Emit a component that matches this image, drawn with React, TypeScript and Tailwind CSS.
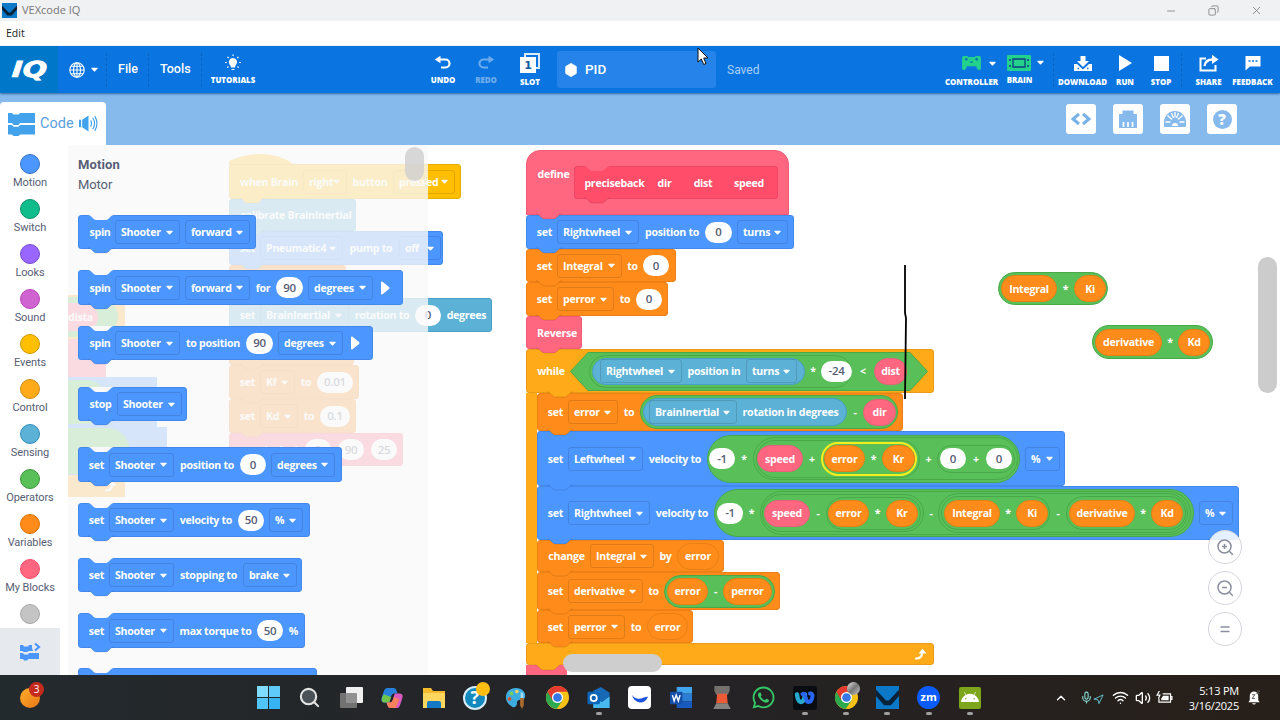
import type { ReactNode } from 'react';
import { Search, Wifi, Volume2, ChevronUp, Mic, Navigation, Minus, X, Copy } from 'lucide-react';
import { FaWhatsapp, FaAndroid } from 'react-icons/fa';

type BoxProps = { className?: string; children?: ReactNode };

const Label = ({ className = '', children }: BoxProps) => (
  <span className={`flex shrink-0 justify-center whitespace-nowrap ${className}`}>{children}</span>
);

const Caret = () => (
  <svg viewBox="0 0 8 5" className="h-[5px] w-[7px] shrink-0">
    <path d="M1 .4h6q1 .1.5 1L4.700 4.500q-.7.700-1.400 0L.5 1.400Q0 .5 1 .4z" fill="#fff" />
  </svg>
);

const Field = ({ className = '', children }: BoxProps) => (
  <span className={`flex h-6 shrink-0 items-center justify-between whitespace-nowrap rounded-[3px] border border-black/12 pr-[6px] pl-[5px] ${className}`}>
    {children}
    <Caret />
  </span>
);

const Num = ({ className = 'w-[26px]', children }: BoxProps) => (
  <span className={`flex h-[21px] shrink-0 items-center justify-center rounded-full bg-white text-[11.5px] font-semibold text-[#575e75] ${className}`}>{children}</span>
);

const Oval = ({ className = '', children }: BoxProps) => (
  <span className={`flex shrink-0 items-center rounded-full border ${className}`}>{children}</span>
);

const Var = ({ className = '', children }: BoxProps) => (
  <Oval className={`h-[27px] justify-center border-[#e87e14] bg-[#ff8c1a] ${className}`}>{children}</Oval>
);

const Arg = ({ className = '', children }: BoxProps) => (
  <Oval className={`h-[27px] justify-center border-[#e8607a] bg-[#ff6680] ${className}`}>{children}</Oval>
);

const Green = ({ className = '', children }: BoxProps) => (
  <Oval className={`border-[#49a949] bg-[#59c059] ${className}`}>{children}</Oval>
);

const Play = () => (
  <svg viewBox="0 0 10 14" className="ml-[2px] h-[14px] w-[10px]">
    <path d="M1 1.500Q1 0 2.500.8L9 6q1 1 0 2L2.500 13.200Q1 14 1 12.500z" fill="#fff" />
  </svg>
);

// Connector under a block, painted over whatever comes next
const Bump = ({ className = '' }: BoxProps) => (
  <svg viewBox="0 0 26 7" className={`absolute -bottom-[6px] left-[9px] z-10 h-[7px] w-[26px] ${className}`}>
    <path d="M0 0v.8q1.800.2 3 1.400l2.500 2.500Q6.700 6 8.500 6h9q1.800 0 3-1.300L23 2.200Q24.200 1 26 .8V0z" fill="currentColor" />
    <path d="M0 .8q1.800.2 3 1.400l2.500 2.500Q6.700 6 8.500 6h9q1.800 0 3-1.300L23 2.200Q24.200 1 26 .8" fill="none" stroke="#000" strokeOpacity=".12" />
  </svg>
);

const Notch = ({ className = 'text-[#f9f9f9]' }: BoxProps) => (
  <svg viewBox="0 0 26 6" className={`absolute -top-px left-[9px] h-[6px] w-[26px] ${className}`}>
    <path d="M0 0q2 .2 3.500 1.700l2 2Q6.700 5 8.500 5h9q1.800 0 3-1.300l2-2Q24 .2 26 0z" fill="currentColor" />
  </svg>
);

const motion = 'border-[#4489ea] bg-[#4c97ff]';
const variable = 'border-[#ee8016] bg-[#ff8c1a]';
const sensing = 'border-[#489fc8] bg-[#5cb1d6]';
const control = 'border-[#ea9c18] bg-[#ffab19]';
const mine = 'border-[#f05c78] bg-[#ff6680]';

const Block = ({ className = '', bump = 'text-[#4c97ff]', notch = false, children }: BoxProps & { bump?: string; notch?: boolean }) => (
  <div className={`relative flex shrink-0 items-center gap-[5px] rounded-[3px] border pl-[10px] ${className}`}>
    {notch && <Notch />}
    {children}
    <Bump className={bump} />
  </div>
);

const categories = [
  ['Motion', 'border-[#3373cc] bg-[#4c97ff]'],
  ['Switch', 'border-[#0b8e69] bg-[#0fbd8c]'],
  ['Looks', 'border-[#774dcb] bg-[#9966ff]'],
  ['Sound', 'border-[#bd42bd] bg-[#cf63cf]'],
  ['Events', 'border-[#cc9900] bg-[#ffbf00]'],
  ['Control', 'border-[#cf8b17] bg-[#ffab19]'],
  ['Sensing', 'border-[#2e8eb8] bg-[#5cb1d6]'],
  ['Operators', 'border-[#389438] bg-[#59c059]'],
  ['Variables', 'border-[#db6e00] bg-[#ff8c1a]'],
  ['My Blocks', 'border-[#ff4d6a] bg-[#ff6680]'],
];

const Sidebar = () => (
  <div className="flex w-[68px] shrink-0 flex-col bg-white">
    <div className="flex w-[60px] flex-col pt-[9px]">
      {categories.map(([name, color]) => (
        <div key={name} className="flex h-[45px] flex-col items-center">
          <span className={`h-[20px] w-[20px] shrink-0 rounded-full border ${color}`} />
          <span className="mt-px whitespace-nowrap font-[Roboto] text-[11px] leading-[15px] tracking-[-0.1px] text-[#575e75]">{name}</span>
        </div>
      ))}
      <div className="flex h-[24px] justify-center">
        <span className="h-[20px] w-[20px] rounded-full border border-[#a9a9a9] bg-[#c4c4c4]" />
      </div>
    </div>
    <div className="flex w-[60px] flex-1 items-center justify-center bg-[#e6eaef]">
      <svg viewBox="0 0 22 20" className="h-[20px] w-[22px]">
        <path d="M1 3h3l1 1.500h4L10 3h3v3l1 3H9.500L8.500 10h-4l-1-1H1zM1 11h3l1 1.500h4l1-1.500h10v6H9.500L8 18.500H5L4 17H1z" fill="#4c97ff" />
        <path d="M16 1.500l4 3.500-4 3.500" fill="none" stroke="#4c97ff" strokeWidth="2.200" />
      </svg>
    </div>
  </div>
);

const Flyout = () => (
  <div className="absolute top-0 left-0 h-full w-[360px] overflow-hidden bg-[#f9f9f9]/80 pl-[10px]">
    <div className="pt-[12px] font-[Roboto] text-[13px] leading-[15px] font-bold tracking-[0.1px] text-[#575e75]">Motion</div>
    <div className="mt-[5px] font-[Roboto] text-[13px] leading-[15px] font-normal tracking-[-0.1px] text-[#575e75]">Motor</div>
    <div className="mt-[23px] flex flex-col items-start">
      <Block notch className={`h-[34px] w-[178px] ${motion}`}>
        <Label className="w-[22px]">spin</Label>
        <Field className="ml-[-1px] w-[65px]">Shooter</Field>
        <Field className="w-[65px]">forward</Field>
      </Block>
      <Block notch className={`mt-[21px] h-[35px] w-[325px] ${motion}`}>
        <Label className="w-[22px]">spin</Label>
        <Field className="ml-[-1px] w-[65px]">Shooter</Field>
        <Field className="w-[65px]">forward</Field>
        <Label className="w-[16px]">for</Label>
        <Num className="w-[27px]">90</Num>
        <Field className="w-[65px]">degrees</Field>
        <Play />
      </Block>
      <Block notch className={`mt-[21px] h-[34px] w-[295px] ${motion}`}>
        <Label className="w-[22px]">spin</Label>
        <Field className="ml-[-1px] w-[65px]">Shooter</Field>
        <Label className="w-[56px]">to position</Label>
        <Num className="w-[27px]">90</Num>
        <Field className="w-[65px]">degrees</Field>
        <Play />
      </Block>
      <Block notch className={`mt-[27px] h-[34px] w-[109px] ${motion}`}>
        <Label className="w-[23px]">stop</Label>
        <Field className="w-[65px]">Shooter</Field>
      </Block>
      <Block notch className={`mt-[26px] h-[35px] w-[264px] ${motion}`}>
        <Label className="w-[15px]">set</Label>
        <Field className="w-[65px]">Shooter</Field>
        <Label className="w-[56px]">position to</Label>
        <Num>0</Num>
        <Field className="w-[64px]">degrees</Field>
      </Block>
      <Block notch className={`mt-[21px] h-[34px] w-[232px] ${motion}`}>
        <Label className="w-[15px]">set</Label>
        <Field className="w-[65px]">Shooter</Field>
        <Label className="w-[54px]">velocity to</Label>
        <Num>50</Num>
        <Field className="w-[34px]">%</Field>
      </Block>
      <Block notch className={`mt-[21px] h-[34px] w-[224px] ${motion}`}>
        <Label className="w-[15px]">set</Label>
        <Field className="w-[65px]">Shooter</Field>
        <Label className="w-[59px]">stopping to</Label>
        <Field className="w-[54px]">brake</Field>
      </Block>
      <Block notch className={`mt-[21px] h-[35px] w-[227px] ${motion}`}>
        <Label className="w-[15px]">set</Label>
        <Field className="w-[65px]">Shooter</Field>
        <Label className="w-[73px]">max torque to</Label>
        <Num>50</Num>
        <Label className="w-[11px]">%</Label>
      </Block>
      <Block notch className={`mt-[20px] h-[34px] w-[239px] ${motion}`} />
    </div>
    <div className="absolute top-[2px] left-[337px] h-[34px] w-[19px] rounded-full bg-[#cecece]/80" />
  </div>
);

const MainStack = () => (
  <div className="absolute top-[9px] left-[161px] flex flex-col items-start">
    <svg viewBox="0 0 70 11" className="h-[11px] w-[70px] -mb-px">
      <path d="M0 11V7Q14 0 32 0T64 10l6 1z" fill="#ffbf00" />
    </svg>
    <Block className="h-[35px] w-[232px] border-[#e6ac00] bg-[#ffbf00]" bump="text-[#ffbf00]">
      <Label className="w-[58px]">when Brain</Label>
      <Field className="w-[44px]">right</Field>
      <Label className="w-[36px]">button</Label>
      <Field className="w-[62px]">pressed</Field>
    </Block>
    <Block className={`h-[32px] w-[127px] ${sensing}`} bump="text-[#5cb1d6]">
      <Label className="w-[112px]">calibrate BrainInertial</Label>
    </Block>
    <Block className={`h-[34px] w-[214px] ${motion}`}>
      <Label className="w-[15px]">set</Label>
      <Field className="w-[83px]">Pneumatic4</Field>
      <Label className="w-[46px]">pump to</Label>
      <Field className="w-[42px]">off</Field>
    </Block>
    <Block className={`h-[33px] w-[117px] ${variable}`} bump="text-[#ff8c1a]" />
    <Block className={`h-[34px] w-[263px] ${sensing}`} bump="text-[#5cb1d6]">
      <Label className="w-[15px]">set</Label>
      <Field className="w-[89px]">BrainInertial</Field>
      <Label className="w-[56px]">rotation to</Label>
      <Num>0</Num>
      <Label className="w-[41px]">degrees</Label>
    </Block>
    <Block className={`h-[33px] w-[125px] ${variable}`} bump="text-[#ff8c1a]" />
    <Block className={`h-[34px] w-[130px] ${variable}`} bump="text-[#ff8c1a]">
      <Label className="w-[15px]">set</Label>
      <Field className="w-[35px]">Kf</Field>
      <Label className="w-[12px]">to</Label>
      <Num className="w-[36px]">0.01</Num>
    </Block>
    <Block className={`h-[34px] w-[127px] ${variable}`} bump="text-[#ff8c1a]">
      <Label className="w-[15px]">set</Label>
      <Field className="w-[38px]">Kd</Field>
      <Label className="w-[12px]">to</Label>
      <Num className="w-[30px]">0.1</Num>
    </Block>
    <Block className={`h-[33px] w-[174px] ${mine}`} bump="text-[#ff6680]">
      <Label className="w-[60px]">precisefwd</Label>
      <Num>0</Num>
      <Num className="ml-[2px] w-[26px]">90</Num>
      <Num className="ml-[2px] w-[26px]">25</Num>
    </Block>
  </div>
);

const LoopArrow = () => (
  <svg viewBox="0 0 12 12" className="h-[12px] w-[12px]">
    <path d="M1 10.500q6 0 6-5.500" fill="none" stroke="#fff" strokeWidth="2.200" strokeLinecap="round" />
    <path d="M3.500 5.500L7.500.7l4 4.800z" fill="#fff" />
  </svg>
);

// Stack that is scrolled mostly out of view on the left
const HiddenStack = () => (
  <div className="absolute top-[150px] left-0 flex flex-col items-start">
    <div className="flex h-[44px] w-[57px] items-center rounded-r-[3px] bg-[#ffab19]">
      <div className="flex h-[40px] w-[50px] items-center rounded-r-full bg-[#59c059]">
        <div className="flex h-[28px] w-[30px] items-center overflow-hidden rounded-r-full bg-[#ff6680]">dista</div>
      </div>
    </div>
    <div className="h-[38px] w-[38px] bg-[#ff6680]" />
    <div className="flex h-[50px] w-[89px] items-center bg-[#4c97ff]"><div className="h-[44px] w-[40px] rounded-r-full bg-[#59c059]" /></div>
    <div className="flex h-[48px] w-[99px] items-center bg-[#4c97ff]"><div className="h-[46px] w-[62px] rounded-r-full bg-[#59c059]" /></div>
    <div className="flex h-[22px] w-[57px] items-center justify-end bg-[#ffab19] pr-2"><LoopArrow /></div>
  </div>
);

const DefineStack = () => (
  <div className="absolute top-[5px] left-[458px] flex flex-col items-start">
    <div className={`relative flex h-[65px] w-[263px] rounded-t-[14px] border pl-[10px] ${mine}`}>
      <Label className="mt-[15px] h-[16px] w-[33px]">define</Label>
      <div className="relative mt-[15px] ml-[4px] flex h-[33px] w-[204px] items-center rounded-[3px] border border-[#f04566] bg-[#ff4d6a] pl-[9px]">
        <Notch className="text-[#ff6680]" />
        <Label className="w-[61px]">preciseback</Label>
        <Label className="ml-[12px] w-[15px]">dir</Label>
        <Label className="ml-[21px] w-[20px]">dist</Label>
        <Label className="ml-[20px] w-[32px]">speed</Label>
        <Bump className="text-[#ff4d6a]" />
      </div>
      <Bump className="text-[#ff6680]" />
    </div>
    <Block className={`h-[34px] w-[268px] ${motion}`}>
      <Label className="w-[15px]">set</Label>
      <Field className="w-[82px]">Rightwheel</Field>
      <Label className="w-[56px]">position to</Label>
      <Num className="w-[27px]">0</Num>
      <Field className="w-[51px]">turns</Field>
    </Block>
    <Block className={`h-[33px] w-[150px] ${variable}`} bump="text-[#ff8c1a]">
      <Label className="w-[15px]">set</Label>
      <Field className="w-[65px]">Integral</Field>
      <Label className="w-[11px]">to</Label>
      <Num>0</Num>
    </Block>
    <Block className={`h-[34px] w-[142px] ${variable}`} bump="text-[#ff8c1a]">
      <Label className="w-[15px]">set</Label>
      <Field className="w-[57px]">perror</Field>
      <Label className="w-[12px]">to</Label>
      <Num>0</Num>
    </Block>
    <Block className={`h-[33px] w-[56px] ${mine}`} bump="text-[#ff6680]">
      <Label className="w-[40px]">Reverse</Label>
    </Block>
    <WhileBlock />
    <div className="h-[20px] w-[41px] bg-[#ff6680]" />
  </div>
);

const WhileBlock = () => (
  <div className="relative flex flex-col items-start">
    <div className={`relative flex h-[44px] w-[408px] items-center rounded-[3px] border pl-[10px] ${control}`}>
      <Label className="w-[28px]">while</Label>
      <div className="relative ml-[5px] flex h-[39px] w-[358px] items-center pl-[19px]">
        <svg viewBox="0 0 358 39" className="absolute inset-0 h-full w-full">
          <path d="M18 .5h322l17.500 19L340 38.500H18L.5 19.500z" fill="#59c059" stroke="#49a949" />
        </svg>
        <Green className="relative h-[33px] w-[263px] pl-[2px]">
          <Oval className={`h-[27px] w-[213px] gap-[5px] pl-[7px] ${sensing}`}>
            <Field className="w-[82px]">Rightwheel</Field>
            <Label className="w-[54px]">position in</Label>
            <Field className="w-[51px]">turns</Field>
          </Oval>
          <Label className="w-[16px]">*</Label>
          <Num className="w-[31px]">-24</Num>
        </Green>
        <Label className="relative w-[22px]">&lt;</Label>
        <Arg className="relative w-[33px]">dist</Arg>
      </div>
      <Bump className="left-[20px] text-[#ffab19]" />
    </div>
    <div className="flex flex-col items-start border-l-[11px] border-[#ffab19]">
      <Block className={`h-[38px] w-[366px] ${variable}`} bump="text-[#ff8c1a]">
        <Label className="w-[15px]">set</Label>
        <Field className="w-[50px]">error</Field>
        <Label className="w-[12px]">to</Label>
        <Green className="h-[34px] w-[258px] pl-[2px]">
          <Oval className={`h-[28px] w-[204px] gap-[5px] pl-[5px] ${sensing}`}>
            <Field className="w-[88px]">BrainInertial</Field>
            <Label className="w-[97px]">rotation in degrees</Label>
          </Oval>
          <Label className="w-[16px]">-</Label>
          <Arg className="w-[33px]">dir</Arg>
        </Green>
      </Block>
      <Block className={`h-[55px] w-[528px] ${motion}`}>
        <Label className="w-[15px]">set</Label>
        <Field className="w-[75px]">Leftwheel</Field>
        <Label className="w-[54px]">velocity to</Label>
        <Green className="h-[48px] w-[313px] pl-[1px]">
          <Num>-1</Num>
          <Label className="w-[18px]">*</Label>
          <Green className="h-[43px] w-[265px] pl-[2px]">
            <Green className="h-[38px] w-[164px]">
              <Arg className="w-[46px]">speed</Arg>
              <Label className="w-[18px]">+</Label>
              <Oval className="h-[34px] w-[96px] border-2 border-[#f6ee1c] bg-[#59c059] pl-px">
                <Var className="w-[41px]">error</Var>
                <Label className="w-[17px]">*</Label>
                <Var className="w-[33px]">Kr</Var>
              </Oval>
            </Green>
            <Label className="w-[17px]">+</Label>
            <Green className="h-[28px] w-[78px] pl-[2px]">
              <Num>0</Num>
              <Label className="w-[20px]">+</Label>
              <Num>0</Num>
            </Green>
          </Green>
        </Green>
        <Field className="w-[35px]">%</Field>
      </Block>
      <Block className={`h-[54px] w-[702px] ${motion}`}>
        <Label className="w-[15px]">set</Label>
        <Field className="w-[82px]">Rightwheel</Field>
        <Label className="w-[54px]">velocity to</Label>
        <Green className="h-[48px] w-[480px] pl-[2px]">
          <Num>-1</Num>
          <Label className="w-[17px]">*</Label>
          <Green className="h-[44px] w-[431px] pl-[1px]">
            <Green className="h-[38px] w-[162px] pl-[1px]">
              <Arg className="w-[46px]">speed</Arg>
              <Label className="w-[16px]">-</Label>
              <Green className="h-[33px] w-[95px] pl-[1px]">
                <Var className="w-[41px]">error</Var>
                <Label className="w-[17px]">*</Label>
                <Var className="w-[32px]">Kr</Var>
              </Green>
            </Green>
            <Label className="w-[14px]">-</Label>
            <Green className="h-[40px] w-[250px] pl-[2px]">
              <Green className="h-[34px] w-[109px] pl-[2px]">
                <Var className="w-[56px]">Integral</Var>
                <Label className="w-[16px]">*</Label>
                <Var className="w-[32px]">Ki</Var>
              </Green>
              <Label className="w-[16px]">-</Label>
              <Green className="h-[34px] w-[120px] pl-[2px]">
                <Var className="w-[66px]">derivative</Var>
                <Label className="w-[16px]">*</Label>
                <Var className="w-[32px]">Kd</Var>
              </Green>
            </Green>
          </Green>
        </Green>
        <Field className="w-[34px]">%</Field>
      </Block>
      <Block className={`h-[32px] w-[187px] ${variable}`} bump="text-[#ff8c1a]">
        <Label className="w-[37px]">change</Label>
        <Field className="w-[64px]">Integral</Field>
        <Label className="w-[13px]">by</Label>
        <Var className="w-[42px]">error</Var>
      </Block>
      <Block className={`h-[38px] w-[243px] ${variable}`} bump="text-[#ff8c1a]">
        <Label className="w-[15px]">set</Label>
        <Field className="w-[75px]">derivative</Field>
        <Label className="w-[11px]">to</Label>
        <Green className="h-[33px] w-[111px] pl-[2px]">
          <Var className="w-[41px]">error</Var>
          <Label className="w-[15px]">-</Label>
          <Var className="w-[49px]">perror</Var>
        </Green>
      </Block>
      <Block className={`h-[33px] w-[156px] ${variable}`} bump="text-[#ff8c1a]">
        <Label className="w-[15px]">set</Label>
        <Field className="w-[57px]">perror</Field>
        <Label className="w-[12px]">to</Label>
        <Var className="w-[41px]">error</Var>
      </Block>
    </div>
    <div className={`flex h-[22px] w-[408px] items-center justify-end rounded-[3px] border pr-[6px] ${control}`}>
      <LoopArrow />
    </div>
    <Bump className="text-[#ffab19]" />
  </div>
);

const ZoomButton = ({ sign }: { sign: '+' | '-' | '=' }) => (
  <div className="flex h-[34px] w-[34px] items-center justify-center rounded-full border border-[#d4d6dd] bg-white/85">
    <svg viewBox="0 0 18 18" className="h-[18px] w-[18px]" fill="none" stroke="#8b8fa0" strokeWidth="1.500">
      {sign === '=' ? (
        <path d="M4.500 7h9M4.500 11.500h9" strokeWidth="1.700" />
      ) : (
        <>
          <circle cx="8.500" cy="8.500" r="6.500" />
          <path d="M13.300 13.300l3.500 3.500M6 8.500h5" />
          {sign === '+' && <path d="M8.500 6v5" />}
        </>
      )}
    </svg>
  </div>
);

const Workspace = () => (
  <div className="relative flex-1 overflow-hidden bg-white font-['Open_Sans',sans-serif] text-[10.6px] leading-[16px] font-bold tracking-[-0.27px] text-white">
    <MainStack />
    <HiddenStack />
    <DefineStack />
    <Green className="absolute top-[127px] left-[930px] h-[33px] w-[110px] pl-[2px]">
      <Var className="w-[56px]">Integral</Var>
      <Label className="w-[17px]">*</Label>
      <Var className="w-[32px]">Ki</Var>
    </Green>
    <Green className="absolute top-[180px] left-[1024px] h-[34px] w-[121px] pl-[2px]">
      <Var className="w-[67px]">derivative</Var>
      <Label className="w-[16px]">*</Label>
      <Var className="w-[32px]">Kd</Var>
    </Green>
    <svg viewBox="0 0 4 134" className="absolute top-[120px] left-[835px] z-10 h-[134px] w-[4px]">
      <path d="M2 0v48l1 5-1 81" fill="none" stroke="#000" strokeWidth="1.800" />
    </svg>
    <div className="absolute inset-0 z-20">
      <Flyout />
      <div className="absolute top-[509px] left-[495px] h-[18px] w-[99px] rounded-full bg-[#cecece]" />
      <div className="absolute top-[112px] left-[1190px] h-[136px] w-[19px] rounded-full bg-[#cccccc]" />
      <div className="absolute top-[385px] left-[1140px] flex flex-col gap-[7px]">
        <ZoomButton sign="+" />
        <ZoomButton sign="-" />
        <ZoomButton sign="=" />
      </div>
    </div>
  </div>
);

const VexLogo = ({ className = '' }: BoxProps) => (
  <svg viewBox="0 0 24 24" className={className}>
    <path d="M0 0h24v24H0z" fill="#0b78c8" />
    <path d="M0 4v6.500l8.500 9.500h7l8.500-9.500V4L13.500 15h-3z" fill="#0a2238" />
  </svg>
);

const ToolItem = ({ className = '', label, raised = false, children }: BoxProps & { label: string; raised?: boolean }) => (
  <div className={`flex shrink-0 flex-col items-center ${raised ? 'pb-[3px]' : ''} ${className}`}>
    <div className="flex h-[22px] items-center">{children}</div>
    <span className={`whitespace-nowrap font-['Open_Sans'] text-[7.9px] leading-[10px] font-extrabold ${raised ? 'mt-px' : 'mt-[3px]'}`}>{label}</span>
  </div>
);

const Divider = () => <span className="h-[34px] shrink-0 border-l border-dashed border-[#085cb4]/70" />;

const Toolbar = () => (
  <div className="relative z-10 flex h-[47px] items-center bg-[#0a75e0] text-white shadow-[0_1px_2px_#2f68a5]">
    <div className="flex h-full w-[58px] items-center justify-center bg-[#0077c8]">
      <span className="inline-block scale-x-130 -skew-x-3 font-['DejaVu_Sans'] text-[22px] leading-none font-bold italic [-webkit-text-stroke:0.7px_white]">IQ</span>
    </div>
    <div className="flex w-[48px] items-center gap-[6px] pl-[11px]">
      <svg viewBox="0 0 16 16" className="h-[16px] w-[16px]" fill="none" stroke="#fff" strokeWidth="1.100">
        <circle cx="8" cy="8" r="7.200" />
        <ellipse cx="8" cy="8" rx="3.500" ry="7.200" />
        <path d="M8 .8v14.400M.8 8h14.400M2 4.300h12M2 11.700h12" />
      </svg>
      <Caret />
    </div>
    <Divider />
    <span className="w-[41px] pl-[11px] font-[Roboto] text-[12.5px] font-medium">File</span>
    <Divider />
    <span className="w-[52px] pl-[11px] font-[Roboto] text-[12.5px] font-medium">Tools</span>
    <Divider />
    <ToolItem raised label="TUTORIALS" className="ml-[8px] w-[46px]">
      <svg viewBox="0 0 18 18" className="h-[18px] w-[18px]" fill="#fff" stroke="#fff">
        <path d="M9 4a4.200 4.200 0 0 1 2.500 7.500L11 13.500H7L6.500 11.500A4.200 4.200 0 0 1 9 4zM7.500 15h3v1h-3z" stroke="none" />
        <path d="M9 .5v1.500M3.500 2.800l1.200 1.200M14.500 2.800l-1.200 1.200M1 8.500h1.800M15.200 8.500H17M3.300 13.500l1.200-1M14.700 13.500l-1.200-1" strokeWidth="1.200" />
      </svg>
    </ToolItem>
    <ToolItem raised label="UNDO" className="ml-[173px] w-[28px]">
      <svg viewBox="0 0 18 16" className="h-[16px] w-[18px]">
        <path d="M4 4.500h7.500a4 4 0 0 1 0 8H7" fill="none" stroke="#fff" strokeWidth="2.200" />
        <path d="M.8 4.500L6.500.8v7.400z" fill="#fff" />
      </svg>
    </ToolItem>
    <ToolItem raised label="REDO" className="ml-[15px] w-[28px] opacity-40">
      <svg viewBox="0 0 18 16" className="h-[16px] w-[18px]">
        <path d="M14 4.500H6.500a4 4 0 0 0 0 8H11" fill="none" stroke="#fff" strokeWidth="2.200" />
        <path d="M17.200 4.500L11.500.8v7.400z" fill="#fff" />
      </svg>
    </ToolItem>
    <ToolItem label="SLOT" className="ml-[16px] w-[28px]">
      <div className="relative h-[20px] w-[20px]">
        <span className="absolute top-0 right-0 h-[16px] w-[16px] border-2 border-white/85" />
        <span className="absolute bottom-0 left-0 flex h-[16px] w-[16px] items-center justify-center bg-white font-['DejaVu_Sans'] text-[11px] leading-none font-bold text-[#175a9e]">1</span>
      </div>
    </ToolItem>
    <div className="ml-[13px] flex h-[37px] w-[159px] items-center rounded-[3px] bg-[#2583ea] pl-[7px]">
      <svg viewBox="0 0 14 16" className="h-[14px] w-[14px]"><path d="M7 .5l6 3.500v8l-6 3.500L1 12V4z" fill="#fff" stroke="#fff" /></svg>
      <span className="ml-[7px] font-[Roboto] text-[13.5px] font-medium">PID</span>
    </div>
    <span className="ml-[11px] font-[Roboto] text-[12px] text-[#a8d0f8]">Saved</span>
    <svg viewBox="0 0 12 19" className="absolute top-px left-[697px] h-[19px] w-[12px]">
      <path d="M1 1v14l3.300-3 2.400 5.500 2.300-1L6.700 11H11z" fill="#fff" stroke="#111" />
    </svg>
    <div className="ml-auto flex items-center">
      <ToolItem label="CONTROLLER" className="w-[51px]">
        <div className="flex items-center gap-[7px] pl-[13px]">
          <svg viewBox="0 0 22 17" className="h-[16px] w-[21px]">
            <path d="M3 1h4v1h8V1h4q2 0 2 2v11q0 2-2 2-2 0-3-4H6q-1 4-3 4t-2-2V3q0-2 2-2z" fill="#24d18c" />
            <path d="M4 4.500h3M15 4.500h3M9.500 7.500h3M5.500 3v3M16.500 3v3" stroke="#0a75b0" strokeWidth="1.400" />
          </svg>
          <Caret />
        </div>
      </ToolItem>
      <ToolItem raised label="BRAIN" className="ml-[9px] w-[27px]">
        <div className="flex items-center gap-[6px] pl-[12px]">
          <svg viewBox="0 0 24 16" className="h-[16px] w-[24px]">
            <rect width="24" height="16" rx="1" fill="#24d18c" />
            <path d="M6 4h12v8H6z" fill="#24d18c" stroke="#0b3f80" strokeWidth="1.300" />
            <path d="M3 4v2M3 10v2M21 4v2M21 10v2" stroke="#0b3f80" strokeWidth="1.500" />
          </svg>
          <Caret />
        </div>
      </ToolItem>
      <span className="w-[20px]" />
      <Divider />
      <ToolItem label="DOWNLOAD" className="ml-[5px] w-[47px]">
        <svg viewBox="0 0 18 17" className="h-[17px] w-[18px]">
          <path d="M6.500 1h5v5h3.500L9 12 3 6h3.500z" fill="#fff" />
          <path d="M0 9h3l6 5.500L15 9h3v7H0z" fill="#fff" />
          <path d="M3.500 13.500h1.500M13 13.500h1.500" stroke="#0a75e0" strokeWidth="1.600" />
        </svg>
      </ToolItem>
      <ToolItem label="RUN" className="ml-[10px] w-[18px]">
        <svg viewBox="0 0 14 16" className="h-[16px] w-[14px]"><path d="M1 0l13 8-13 8z" fill="#fff" /></svg>
      </ToolItem>
      <ToolItem label="STOP" className="ml-[17px] w-[20px]">
        <span className="h-[15px] w-[15px] bg-white" />
      </ToolItem>
      <span className="w-[10px]" />
      <Divider />
      <ToolItem label="SHARE" className="ml-[14px] w-[25px]">
        <svg viewBox="0 0 20 18" className="h-[18px] w-[20px]" fill="none" stroke="#fff" strokeWidth="2">
          <path d="M7 4.500H1.500v12h15V11" />
          <path d="M5.500 12q1-6.500 8-6.500" strokeWidth="2.300" />
          <path d="M13 .8L19.500 5.500 13 10z" fill="#fff" stroke="none" />
        </svg>
      </ToolItem>
      <ToolItem label="FEEDBACK" className="ml-[12px] mr-[8px] w-[39px]">
        <svg viewBox="0 0 16 16" className="h-[16px] w-[16px]">
          <path d="M.5 1h15v10.500H5L.5 15.500z" fill="#fff" />
          <path d="M3.500 6h2M7 6h2M10.500 6h2" stroke="#0a75e0" strokeWidth="1.700" />
        </svg>
      </ToolItem>
    </div>
  </div>
);

const TabBar = () => (
  <div className="flex h-[52px] items-end justify-between bg-[#86baec]">
    <div className="flex h-[43px] w-[106px] items-center rounded-t-[4px] bg-white pl-[8px]">
      <svg viewBox="0 0 27 24" className="h-[24px] w-[27px]">
        <path d="M0 1h4l1.500 1.500h5L12 1h15v10H12l-1.500 2h-5L4 11H0zM0 13h4l1.500 1.700h5L12 13h15v9.500H12L10.500 24h-5L4 22.500H0z" fill="#42a2ec" />
      </svg>
      <span className="ml-[5px] font-[Roboto] text-[14.500px] text-[#5b9fdd]">Code</span>
      <svg viewBox="0 0 18 16" className="ml-[5px] h-[17px] w-[19px]">
        <path d="M0 4.500h2v7H0zM3 4.500L9 .5v15l-6-4z" fill="#42a2ec" />
        <path d="M11 5q1.800 3 0 6M13 2.500q3.500 5.500 0 11M15 1q4 7 0 14" fill="none" stroke="#42a2ec" strokeWidth="1.100" />
      </svg>
    </div>
    <div className="flex gap-[17px] pr-[43px] pb-[11px]">
      <div className="flex h-[30px] w-[30px] items-center justify-center rounded-[3px] bg-white">
        <svg viewBox="0 0 22 14" className="h-[14px] w-[22px]" fill="none" stroke="#78b2e8" strokeWidth="3">
          <path d="M9 2L3 7l6 5M13 2l6 5-6 5" />
        </svg>
      </div>
      <div className="flex h-[30px] w-[30px] items-center justify-center rounded-[3px] bg-white">
        <svg viewBox="0 0 20 20" className="h-[20px] w-[20px]">
          <path d="M1 5h3.500V1.500h11V5H19v14H1z" fill="#86baec" />
          <path d="M5.500 13v5M10 13v5M14.500 13v5" stroke="#fff" strokeWidth="1.700" />
        </svg>
      </div>
      <div className="flex h-[30px] w-[30px] items-center justify-center rounded-[3px] bg-white">
        <svg viewBox="0 0 24 18" className="h-[18px] w-[24px]">
          <path d="M1 17V12a11 11 0 0 1 22 0v5z" fill="#86baec" />
          <path d="M2.500 12h5M4.500 5.500l4.500 4M8.500 3l2 5M12 2v5.500M15.500 3l-2 5M19.500 5.500l-4.500 4M21.500 12h-5" stroke="#fff" strokeWidth="1.300" />
          <path d="M9 16a3 3 0 0 1 6 0z" fill="#fff" />
        </svg>
      </div>
      <div className="flex h-[30px] w-[30px] items-center justify-center rounded-[3px] bg-white">
        <span className="flex h-[19px] w-[19px] items-center justify-center rounded-full bg-[#86baec] font-['Open_Sans'] text-[15px] font-extrabold text-white">?</span>
      </div>
    </div>
  </div>
);

const Chrome = () => (
  <svg viewBox="0 0 24 24" className="h-[23px] w-[23px]">
    <circle cx="12" cy="12" r="12" fill="#fbc116" />
    <path d="M12 12L1.600 6A12 12 0 0 0 11 24l6.200-9z" fill="#2da94f" />
    <path d="M12 6h10.400A12 12 0 0 0 1.600 6l5.200 9z" fill="#e33b2e" />
    <circle cx="12" cy="12" r="5.800" fill="#fff" />
    <circle cx="12" cy="12" r="4.500" fill="#3578e5" />
  </svg>
);

const AppSlot = ({ running = false, children }: BoxProps & { running?: boolean }) => (
  <div className="relative flex h-[45px] w-[41.25px] shrink-0 items-center justify-center">
    {children}
    {running && <span className="absolute bottom-[5px] h-[3px] w-[6px] rounded-full bg-[#a0a0a0]" />}
  </div>
);

const Taskbar = () => (
  <div className="flex h-[45px] items-center bg-linear-to-r from-[#232a2d] via-[#242326] to-[#271f19] text-white">
    <div className="relative flex w-[248px] items-center pl-[20px]">
      <span className="h-[20px] w-[20px] rounded-full bg-linear-to-br from-[#ffae28] to-[#e8761b]" />
      <span className="absolute -top-[6px] left-[29px] flex h-[15px] w-[15px] items-center justify-center rounded-full bg-[#c42b1c] font-['Open_Sans'] text-[10px]">3</span>
    </div>
    <AppSlot>
      <div className="grid grid-cols-2 gap-px">
        <span className="h-[11px] w-[11px] bg-[#7fdcff]" /><span className="h-[11px] w-[11px] bg-[#5fcbfb]" />
        <span className="h-[11px] w-[11px] bg-[#51c4f8]" /><span className="h-[11px] w-[11px] bg-[#35b3f3]" />
      </div>
    </AppSlot>
    <AppSlot><Search size={23} color="#e4e4e4" fill="#4a5257" strokeWidth={2.2} /></AppSlot>
    <AppSlot>
      <div className="relative h-[21px] w-[23px]">
        <span className="absolute top-0 right-0 h-[16px] w-[17px] rounded-[1px] bg-[#f0f0f0]" />
        <span className="absolute bottom-0 left-0 h-[15px] w-[17px] rounded-[1px] bg-[#808080]/85" />
      </div>
    </AppSlot>
    <AppSlot>
      <svg viewBox="0 0 24 24" className="h-[22px] w-[22px]">
        <path d="M7 1h7q2 0 2.500 2L18 7h-4q-2 0-3 3l-2 7H4q-5 0-3-6l2-6q1-4 4-4z" fill="#2680dc" />
        <path d="M3 8l-2 4q-1 5 3 5h5l2-6z" fill="#6fc54c" />
        <path d="M17 23h-7q-2 0-2.500-2L6 17h4q2 0 3-3l2-7h5q5 0 3 6l-2 6q-1 4-4 4z" fill="#d95bc0" />
        <path d="M6 17h4q2 0 3-3l1-3 6 2-4 10h-6q-2 0-2.500-2z" fill="#f5825d" />
      </svg>
    </AppSlot>
    <AppSlot>
      <svg viewBox="0 0 24 22" className="h-[22px] w-[24px]">
        <path d="M1 1h8l2 3h12v17H1z" fill="#f5ba2e" /><path d="M1 6h22v15H1z" fill="#ffd75e" /><path d="M5 16q0-2 2-2h10q2 0 2 2v5H5z" fill="#1478c4" />
      </svg>
    </AppSlot>
    <AppSlot>
      <span className="flex h-[24px] w-[24px] items-center justify-center rounded-full border-2 border-[#d8eef8] bg-[#1489bd] font-['Open_Sans'] text-[18px] font-bold">?</span>
      <span className="absolute top-[7px] left-[22px] h-[14px] w-[14px] rounded-full bg-[#ffbd12]" />
    </AppSlot>
    <AppSlot>
      <svg viewBox="0 0 24 24" className="h-[22px] w-[22px]">
        <path d="M12 1C22 1 25 12 19 14c-4 0-6 0-6 4s-4 5-6 3C-3 15 0 1 12 1z" fill="#3daee0" />
        <circle cx="7" cy="7" r="2" fill="#78d05b" /><circle cx="13" cy="5" r="2" fill="#f4d05f" /><circle cx="5" cy="13" r="2" fill="#d9532e" />
        <path d="M17 6h3v9h-3z" fill="#9edbf5" /><path d="M16.500 12h4v8l-2 4-2-4z" fill="#a96a2d" />
      </svg>
    </AppSlot>
    <AppSlot><Chrome /></AppSlot>
    <AppSlot running>
      <svg viewBox="0 0 24 24" className="h-[23px] w-[24px]">
        <path d="M6 5l8-4 9 6v16H6z" fill="#1769b5" /><path d="M6 12l9 5 8-6v12H6z" fill="#48b9ee" /><rect y="6" width="13" height="13" rx="1.500" fill="#0b65b8" />
        <circle cx="6.500" cy="12.500" r="3.200" fill="none" stroke="#fff" strokeWidth="1.800" />
      </svg>
    </AppSlot>
    <AppSlot>
      <div className="flex h-[23px] w-[23px] items-center justify-center rounded-[4px] bg-white">
        <svg viewBox="0 0 20 12" className="h-[12px] w-[20px]"><path d="M2 3q4 5 9 3.500 4-1.500 7-2Q16 10.500 10 10.500 4 10 2 3z" fill="#1b53e0" /></svg>
      </div>
    </AppSlot>
    <AppSlot>
      <svg viewBox="0 0 24 24" className="h-[23px] w-[23px]">
        <path d="M7 1h16v7H7z" fill="#41a5ee" /><path d="M7 8h16v8H7z" fill="#2b7cd3" /><path d="M7 16h16v7H7z" fill="#185abd" />
        <rect y="6" width="13" height="13" rx="1" fill="#1550a8" /><path d="M2.500 9.500l1.800 6 2.200-6 2.200 6 1.800-6" fill="none" stroke="#fff" strokeWidth="1.500" />
      </svg>
    </AppSlot>
    <AppSlot>
      <svg viewBox="0 0 18 24" className="h-[23px] w-[18px]">
        <path d="M1 0h16v5l-2 4H3L1 5z" fill="#74706e" /><path d="M4 8h10l1 10H3z" fill="#ec5b36" /><path d="M3 18h12l3 6H0z" fill="#858280" />
      </svg>
    </AppSlot>
    <AppSlot><FaWhatsapp size={25} color="#34c866" /></AppSlot>
    <AppSlot running>
      <svg viewBox="0 0 24 24" className="h-[24px] w-[24px]">
        <rect width="24" height="24" rx="3" fill="#080c11" />
        <path d="M4 8.500q1 7.500 4 7.500t4-7.500" fill="none" stroke="#25a9ce" strokeWidth="4.500" strokeLinecap="round" strokeLinejoin="round" />
        <path d="M9.500 8q2.500-1 3 3.500 1 4.500 3 4.500 3.500 0 4-6.500-.5-2.500-2.500-2" fill="none" stroke="#2865f0" strokeWidth="4" strokeLinecap="round" />
      </svg>
    </AppSlot>
    <AppSlot running>
      <Chrome />
      <span className="absolute top-[7px] left-[21px] h-[13px] w-[13px] rounded-full bg-linear-to-br from-[#eee] via-[#777] to-[#ccc]" />
    </AppSlot>
    <AppSlot running><VexLogo className="h-[23px] w-[23px]" /></AppSlot>
    <AppSlot running>
      <span className="flex h-[23px] w-[23px] items-center justify-center rounded-full bg-[#0b5cff] font-['Open_Sans'] text-[11px] font-bold">zm</span>
    </AppSlot>
    <AppSlot running>
      <span className="flex h-[22px] w-[22px] items-center justify-center rounded-[2px] bg-[#7da61c]"><FaAndroid size={18} color="#fff" /></span>
    </AppSlot>
    <div className="ml-auto flex items-center font-['Open_Sans']">
      <ChevronUp size={14} strokeWidth={2.2} />
      <Mic size={13} color="#8adfd5" className="ml-[12px]" />
      <Navigation size={11} color="#62c9d3" className="mt-[4px]" />
      <Wifi size={17} className="ml-[8px]" />
      <Volume2 size={16} className="ml-[6px]" />
      <svg viewBox="0 0 18 14" className="ml-[5px] h-[13px] w-[17px]" fill="none" stroke="#fff" strokeWidth="1.300">
        <path d="M7 3h8.500v9H3V8M15.500 6H17v3h-1.500" />
        <path d="M7.500 5h6v5h-8V8z" fill="#fff" stroke="none" />
        <path d="M3.500 0L1 4.500h3L2.500 8" />
      </svg>
      <div className="ml-[14px] flex w-[52px] flex-col items-end whitespace-nowrap text-[11px] leading-[15px] tracking-[-0.2px]">
        <span>5:13 PM</span>
        <span>3/16/2025</span>
      </div>
      <svg viewBox="0 0 14 16" className="mr-[19px] ml-[8px] h-[15px] w-[14px]">
        <path d="M2.500 6a4.500 4.500 0 0 1 9 0v5l1.500 2H1l1.500-2zM5 14h4q-.5 1.500-2 1.500T5 14z" fill="#fff" />
        <path d="M5 5h3l-3 4h3M10 1h3l-3 3h3" fill="none" stroke="#5c5550" strokeWidth="1" />
      </svg>
    </div>
  </div>
);

const App = () => (
  <div className="flex h-[720px] w-[1280px] flex-col overflow-hidden bg-white">
    <div className="flex h-[21px] shrink-0 items-center bg-[#f0f1f2]">
      <VexLogo className="ml-[2px] h-[15px] w-[15px]" />
      <span className="ml-[5px] font-['Open_Sans'] text-[11px] text-[#777]">VEXcode IQ</span>
      <div className="ml-auto flex items-center gap-[31px] pr-[17px] text-[#777]">
        <Minus size={12} strokeWidth={1.5} />
        <Copy size={11} strokeWidth={1.7} className="-scale-x-100" />
        <X size={13} strokeWidth={1.5} />
      </div>
    </div>
    <div className="flex h-[25px] shrink-0 items-center bg-white pl-[6px] font-['Open_Sans'] text-[10.500px] text-[#222]">Edit</div>
    <Toolbar />
    <TabBar />
    <div className="flex min-h-0 flex-1">
      <Sidebar />
      <Workspace />
    </div>
    <Taskbar />
  </div>
);

export default App;
